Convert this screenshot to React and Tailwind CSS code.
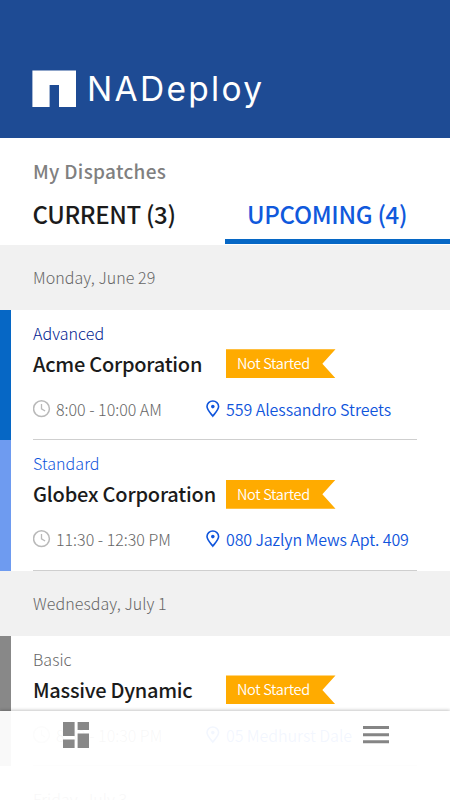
import React from "react";

function LogoMark() {
  return (
    <svg className="h-[37px] w-[44px] shrink-0" viewBox="0 0 44 37" fill="#fff">
      <path d="M0.4 0.4H44V37H27V15H17.6V37H0.4Z" />
    </svg>
  );
}

function ClockIcon() {
  return (
    <svg className="size-[18px] shrink-0" viewBox="0 0 18 18" fill="none" stroke="#b9b9b9" strokeWidth="1.5">
      <circle cx="8.5" cy="8.7" r="7.9" />
      <path d="M8.5 4.1V8.9L12.1 11" strokeWidth="1.3" />
    </svg>
  );
}

function PinIcon() {
  return (
    <svg className="h-[18px] w-[14px] shrink-0" viewBox="0 0 14 18" fill="none">
      <path d="M6.8 16.1C4.8 13.5 1 9.8 1 6.6C1 3.4 3.6 1 6.8 1S12.6 3.4 12.6 6.6C12.6 9.8 8.8 13.5 6.8 16.1Z" stroke="#0f55dc" strokeWidth="1.6" />
      <circle cx="6.8" cy="6.6" r="1.8" fill="#0f55dc" />
    </svg>
  );
}

function DayHeader({ children }) {
  return (
    <div className="flex h-[65.3px] shrink-0 items-center bg-[#f1f1f1] pl-[33px] text-[16px] leading-[24px] font-light tracking-[0.06px] text-[#666]">
      {children}
    </div>
  );
}

function Dispatch({ bar, levelColor, level, name, nameTracking, time, place, placeTracking }) {
  return (
    <div className="flex h-[130.4px] shrink-0">
      <div className={"w-[11px] shrink-0 " + bar} />
      <div className="ml-[22px] flex w-[384px] flex-col border-b border-[#cfcfcf] pt-[11px]">
        <div className={"h-[24px] text-[16px] leading-[24px] font-light tracking-[0.06px] " + levelColor}>{level}</div>
        <div className="mt-[4px] flex h-[30px] items-center">
          <div className={"w-[193px] shrink-0 whitespace-nowrap text-[20px] leading-[30px] font-medium text-[#1b1b1b] " + nameTracking}>{name}</div>
          <div className="flex h-[29px] w-[109.5px] items-center bg-[#ffab00] pl-[11px] text-[14.5px] leading-[27px] tracking-[-0.32px] font-[350] text-white [clip-path:polygon(0_0,100%_0,88%_50%,100%_100%,0_100%)]">
            <span className="-mt-[2px]">Not Started</span>
          </div>
        </div>
        <div className="mt-[18px] flex h-[24px] items-center text-[16px] leading-[24px] font-light whitespace-nowrap">
          <div className="flex w-[173px] items-center gap-[5px] text-[#666]">
            <ClockIcon />
            <span>{time}</span>
          </div>
          <div className={"flex items-center gap-[6px] font-[350] text-[#0f55dc] " + placeTracking}>
            <PinIcon />
            <span>{place}</span>
          </div>
        </div>
      </div>
    </div>
  );
}

function TabBar() {
  return (
    <nav className="absolute inset-x-0 bottom-0 flex h-[89px] justify-between bg-white/95 pr-[61px] pl-[63px] shadow-[0_-1px_3px_rgba(0,0,0,0.22)]">
      <svg className="mt-[11px] size-[26px]" viewBox="0 0 26 26" fill="#888">
        <path d="M0 0H11.6V14H0ZM14.6 0H26V8H14.6ZM0 17.4H11.6V26H0ZM14.6 11.4H26V26H14.6Z" />
      </svg>
      <svg className="mt-[15px] h-[18px] w-[26px]" viewBox="0 0 26 18" fill="#858585">
        <path d="M0 0H26V3H0ZM0 7.2H26V10.2H0ZM0 14.2H26V17.2H0Z" />
      </svg>
    </nav>
  );
}

export default function App() {
  return (
    <div className="relative flex h-[800px] w-[450px] flex-col overflow-hidden bg-white font-['Noto_Sans_CJK_SC',sans-serif]">
      <header className="flex h-[137.5px] shrink-0 items-start bg-[#1e4b94] pt-[70px] pl-[32px]">
        <LogoMark />
        <div className="ml-[11px] font-['Inter',sans-serif] text-[33.5px] leading-[39px] tracking-[2.3px] font-[370] text-white">NADeploy</div>
      </header>
      <section className="h-[107px] shrink-0 pt-[18.5px]">
        <h1 className="pl-[33px] text-[19px] leading-[30px] font-medium tracking-[0.3px] text-[#808080]">My Dispatches</h1>
        <div className="flex h-[58px] text-[24px] leading-[36px] font-medium whitespace-nowrap">
          <div className="w-[225px] pt-[10px] pl-[32.5px] tracking-[-0.36px] text-[#1b1b1b]">CURRENT (3)</div>
          <div className="w-[225px] border-b-[5px] border-[#0667c5] pt-[10px] pl-[22px] tracking-[-0.3px] text-[#1059dc]">UPCOMING (4)</div>
        </div>
      </section>
      <DayHeader>Monday, June 29</DayHeader>
      <Dispatch bar="bg-[#0667c5]" levelColor="text-[#001a90]" level="Advanced" name="Acme Corporation" nameTracking="tracking-[-0.24px]" time="8:00 - 10:00 AM" place="559 Alessandro Streets" placeTracking="tracking-[-0.07px]" />
      <Dispatch bar="bg-[#6e9bf0]" levelColor="text-[#0f55dc]" level="Standard" name="Globex Corporation" nameTracking="tracking-[-0.2px]" time="11:30 - 12:30 PM" place="080 Jazlyn Mews Apt. 409" placeTracking="tracking-[-0.12px]" />
      <DayHeader>Wednesday, July 1</DayHeader>
      <Dispatch bar="bg-[#888]" levelColor="text-[#666]" level="Basic" name="Massive Dynamic" nameTracking="tracking-[-0.27px]" time="8:30 - 10:30 PM" place="05 Medhurst Dale" placeTracking="tracking-[-0.1px]" />
      <DayHeader>Friday, July 3</DayHeader>
      <TabBar />
    </div>
  );
}
